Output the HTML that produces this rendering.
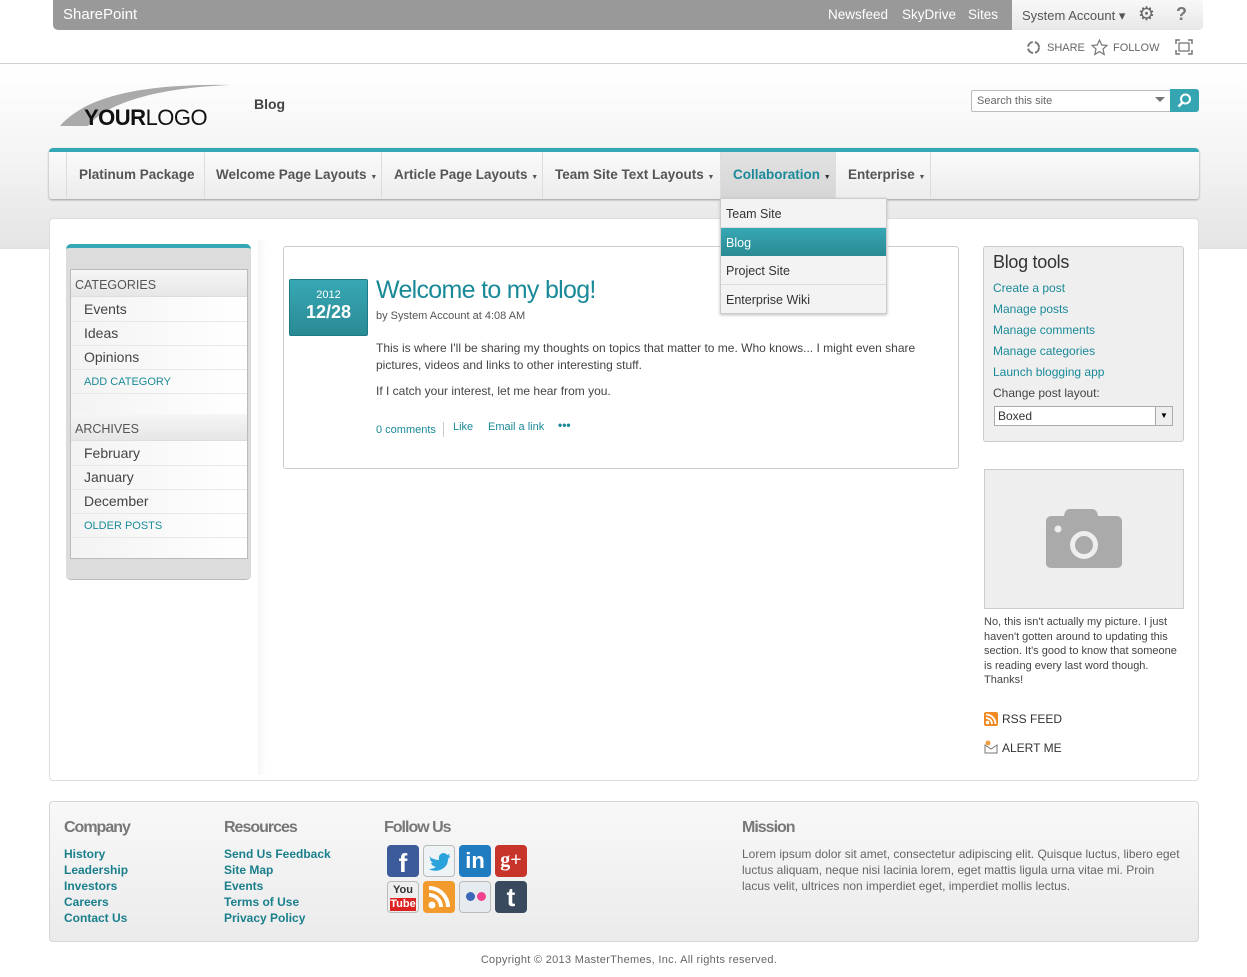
<!DOCTYPE html>
<html><head><meta charset="utf-8"><style>
*{margin:0;padding:0;box-sizing:border-box}
body{width:1247px;height:977px;position:relative;overflow:hidden;font-family:"Liberation Sans",Arial,sans-serif;background:#fff;color:#444}
.a{position:absolute}
a{text-decoration:none}
.nv{top:167px;font-size:13.5px;font-weight:bold;color:#555;position:absolute}
</style></head><body>
<div class="a" style="left:0;top:63px;width:1247px;height:186px;border-top:1px solid #d0d0d0;background:linear-gradient(#fff 0%,#f4f4f4 50%,#e4e4e4 100%)"></div>
<div class="a" style="left:0;top:248px;width:1247px;height:1px;background:#e2e2e2"></div>
<div class="a" style="left:53px;top:0;width:1150px;height:30px;background:#999;border-radius:0 0 5px 5px"></div>
<div class="a" style="left:1012px;top:0;width:191px;height:30px;background:linear-gradient(#f8f8f8,#e8e8e8);border-radius:0 0 5px 0"></div>
<div class="a" style="left:63px;top:6px;font-size:15px;color:#fff">SharePoint</div>
<div class="a" style="left:828px;top:7px;font-size:13.5px;color:#fff">Newsfeed</div>
<div class="a" style="left:902px;top:7px;font-size:13.5px;color:#fff">SkyDrive</div>
<div class="a" style="left:968px;top:7px;font-size:13.5px;color:#fff">Sites</div>
<div class="a" style="left:1022px;top:8px;font-size:13px;color:#555">System Account ▾</div>
<div class="a" style="left:1138px;top:3px;font-size:19px;color:#666">⚙</div>
<div class="a" style="left:1176px;top:4px;font-size:18px;font-weight:bold;color:#777">?</div>
<svg class="a" style="left:1026px;top:40px" width="15" height="15"><circle cx="7.5" cy="7.5" r="5.5" stroke="#777" stroke-width="2" fill="none" stroke-dasharray="7 2"/></svg>
<div class="a" style="left:1047px;top:42px;font-size:11px;color:#666">SHARE</div>
<svg class="a" style="left:1091px;top:39px" width="17" height="17"><path d="M8.5 1 L10.7 6 L16 6.4 L12 10 L13.2 15.5 L8.5 12.6 L3.8 15.5 L5 10 L1 6.4 L6.3 6 Z" fill="none" stroke="#777" stroke-width="1.2"/></svg>
<div class="a" style="left:1113px;top:42px;font-size:11px;color:#666">FOLLOW</div>
<svg class="a" style="left:1175px;top:39px" width="18" height="16"><path d="M1 5V1H5M13 1H17V5M17 11V15H13M5 15H1V11" stroke="#777" stroke-width="1.5" fill="none"/><rect x="4" y="4" width="10" height="8" fill="none" stroke="#777" stroke-width="1.3"/></svg>
<svg class="a" style="left:58px;top:82px" width="175" height="48"><path d="M2 44 C30 12 90 2 172 3 C100 6 50 20 30 44 Z" fill="#aaa"/></svg>
<div class="a" style="left:84px;top:105px;font-size:22px;color:#111;letter-spacing:-0.5px"><b>YOUR</b>LOGO</div>
<div class="a" style="left:254px;top:96px;font-size:14px;font-weight:bold;color:#444">Blog</div>
<div class="a" style="left:971px;top:90px;width:200px;height:22px;border:1px solid #bbb;background:#fff;border-radius:2px 0 0 2px;font-size:11px;color:#666;padding:4px 5px">Search this site</div>
<div class="a" style="left:1155px;top:97px;border:5px solid transparent;border-top:5px solid #777"></div>
<div class="a" style="left:1170px;top:89px;width:29px;height:23px;background:#35a5b2;border-radius:0 3px 3px 0"></div>
<svg class="a" style="left:1176px;top:92px" width="17" height="17"><circle cx="9.5" cy="7" r="4.5" stroke="#fff" stroke-width="2" fill="none"/><path d="M6.5 10.5 L2.5 14.5" stroke="#fff" stroke-width="2.5"/></svg>
<div class="a" style="left:49px;top:148px;width:1150px;height:51px;border-top:4px solid #35a8b5;border-radius:4px 4px 3px 3px;background:linear-gradient(#fafafa,#ececec);box-shadow:0 1px 2px #999"></div>
<div class="a" style="left:720px;top:152px;width:115px;height:46px;background:linear-gradient(#e2e2e2,#d6d6d6)"></div>
<div class="a" style="left:66px;top:152px;width:1px;height:46px;background:#ddd"></div>
<div class="a" style="left:204px;top:152px;width:1px;height:46px;background:#ddd"></div>
<div class="a" style="left:381px;top:152px;width:1px;height:46px;background:#ddd"></div>
<div class="a" style="left:542px;top:152px;width:1px;height:46px;background:#ddd"></div>
<div class="a" style="left:720px;top:152px;width:1px;height:46px;background:#ddd"></div>
<div class="a" style="left:835px;top:152px;width:1px;height:46px;background:#ddd"></div>
<div class="a" style="left:930px;top:152px;width:1px;height:46px;background:#ddd"></div>
<div class="nv" style="left:79px">Platinum Package</div>
<div class="nv" style="left:216px">Welcome Page Layouts <span style="font-size:7px">▼</span></div>
<div class="nv" style="left:394px">Article Page Layouts <span style="font-size:7px">▼</span></div>
<div class="nv" style="left:555px">Team Site Text Layouts <span style="font-size:7px">▼</span></div>
<div class="nv" style="left:733px;color:#1a8a99">Collaboration <span style="font-size:7px;color:#333">▼</span></div>
<div class="nv" style="left:848px">Enterprise <span style="font-size:7px">▼</span></div>
<div class="a" style="left:49px;top:218px;width:1150px;height:563px;border:1px solid #ddd;border-radius:4px;background:#fff"></div>
<div class="a" style="left:258px;top:240px;width:8px;height:535px;background:linear-gradient(90deg,#f6f6f6,#fff)"></div>
<div class="a" style="left:66px;top:244px;width:185px;height:336px;background:#dcdcdc;border-top:4px solid #35a8b5;border-radius:5px;border-bottom:1px solid #bbb"></div>
<div class="a" style="left:70px;top:269px;width:178px;height:290px;background:linear-gradient(90deg,#f3f3f3,#fff);border:1px solid #bbb"></div>
<div class="a" style="left:71px;top:270px;width:176px;height:27px;background:linear-gradient(#f6f6f6,#e6e6e6);border-bottom:1px solid #ddd"></div>
<div class="a" style="left:75px;top:278px;font-size:12.5px;color:#555">CATEGORIES</div>
<div style="position:absolute;left:71px;top:298px;width:176px;font-size:14px;color:#444">
<div style="height:24px;border-bottom:1px solid #e8e8e8;padding:3px 0 0 13px">Events</div>
<div style="height:24px;border-bottom:1px solid #e8e8e8;padding:3px 0 0 13px">Ideas</div>
<div style="height:24px;border-bottom:1px solid #e8e8e8;padding:3px 0 0 13px">Opinions</div>
<div style="height:24px;border-bottom:1px solid #e8e8e8;padding:6px 0 0 13px;font-size:11px;color:#1a8a99">ADD CATEGORY</div>
</div>
<div class="a" style="left:71px;top:414px;width:176px;height:27px;background:linear-gradient(#f6f6f6,#e6e6e6);border-bottom:1px solid #ddd"></div>
<div class="a" style="left:75px;top:422px;font-size:12.5px;color:#555">ARCHIVES</div>
<div style="position:absolute;left:71px;top:442px;width:176px;font-size:14px;color:#444">
<div style="height:24px;border-bottom:1px solid #e8e8e8;padding:3px 0 0 13px">February</div>
<div style="height:24px;border-bottom:1px solid #e8e8e8;padding:3px 0 0 13px">January</div>
<div style="height:24px;border-bottom:1px solid #e8e8e8;padding:3px 0 0 13px">December</div>
<div style="height:24px;border-bottom:1px solid #e8e8e8;padding:6px 0 0 13px;font-size:11px;color:#1a8a99">OLDER POSTS</div>
</div>
<div class="a" style="left:283px;top:246px;width:676px;height:223px;border:1px solid #ccc;border-radius:3px"></div>
<div class="a" style="left:289px;top:279px;width:79px;height:57px;background:linear-gradient(#37a8b4,#2a8a94);border:1px solid #1e7a84;border-radius:2px;color:#fff;text-align:center">
<div style="font-size:11px;margin-top:9px">2012</div><div style="font-size:18px;font-weight:bold;margin-top:1px">12/28</div></div>
<div class="a" style="left:376px;top:276px;font-size:25px;color:#1a8a99;letter-spacing:-0.7px">Welcome to my blog!</div>
<div class="a" style="left:376px;top:310px;font-size:11px;color:#555">by System Account at 4:08 AM</div>
<div class="a" style="left:376px;top:340px;width:560px;font-size:12px;line-height:17px;color:#444">This is where I'll be sharing my thoughts on topics that matter to me. Who knows... I might even share pictures, videos and links to other interesting stuff.</div>
<div class="a" style="left:376px;top:384px;font-size:12px;color:#444">If I catch your interest, let me hear from you.</div>
<div class="a" style="left:376px;top:424px;font-size:11px;color:#1a8a99">0 comments</div>
<div class="a" style="left:443px;top:422px;width:1px;height:15px;background:#ccc"></div>
<div class="a" style="left:453px;top:421px;font-size:11px;color:#1a8a99">Like</div>
<div class="a" style="left:488px;top:421px;font-size:11px;color:#1a8a99">Email a link</div>
<div class="a" style="left:558px;top:418px;font-size:12px;font-weight:bold;color:#1a8a99">•••</div>
<div class="a" style="left:720px;top:198px;width:167px;height:116px;background:#f3f3f3;border:1px solid #ccc;box-shadow:0 1px 3px #bbb"></div>
<div class="a" style="left:721px;top:227px;width:165px;height:1px;background:#ddd"></div>
<div class="a" style="left:721px;top:228px;width:165px;height:28px;background:linear-gradient(#37a8b4,#2a8a94)"></div>
<div class="a" style="left:721px;top:284px;width:165px;height:1px;background:#ddd"></div>
<div class="a" style="left:726px;top:207px;font-size:12.5px;color:#333">Team Site</div>
<div class="a" style="left:726px;top:236px;font-size:12.5px;color:#fff">Blog</div>
<div class="a" style="left:726px;top:264px;font-size:12.5px;color:#333">Project Site</div>
<div class="a" style="left:726px;top:293px;font-size:12.5px;color:#333">Enterprise Wiki</div>
<div class="a" style="left:983px;top:246px;width:201px;height:196px;background:#efefef;border:1px solid #ccc;border-radius:3px"></div>
<div class="a" style="left:993px;top:252px;font-size:18px;color:#333;letter-spacing:-0.3px">Blog tools</div>
<div class="a" style="left:993px;top:278px;font-size:12px;line-height:21px;color:#1a8a99">Create a post<br>Manage posts<br>Manage comments<br>Manage categories<br>Launch blogging app<br><span style="color:#444">Change post layout:</span></div>
<div class="a" style="left:994px;top:406px;width:179px;height:20px;background:#fff;border:1px solid #aaa;font-size:12px;color:#333;padding:2px 3px">Boxed</div>
<div class="a" style="left:1155px;top:407px;width:17px;height:18px;background:#eee;border-left:1px solid #aaa;font-size:8px;text-align:center;line-height:18px;color:#000">▼</div>
<div class="a" style="left:984px;top:469px;width:200px;height:140px;background:#eee;border:1px solid #ccc"></div>
<svg class="a" style="left:1046px;top:509px" width="77" height="60"><path d="M24 0 H46 Q51 0 52 7 H70 Q76 7 76 13 V54 Q76 59 70 59 H6 Q0 59 0 54 V13 Q0 7 6 7 H18 Q19 0 24 0Z" fill="#aaa"/><circle cx="38" cy="36" r="14" fill="#eee"/><circle cx="38" cy="36" r="9" fill="#aaa"/><circle cx="12" cy="20" r="3.5" fill="#eee"/></svg>
<div class="a" style="left:984px;top:615px;width:200px;font-size:11px;line-height:14.5px;color:#444">No, this isn't actually my picture. I just haven't gotten around to updating this section. It's good to know that someone is reading every last word though. Thanks!</div>
<div class="a" style="left:984px;top:712px;width:14px;height:14px;background:#f08a24;border-radius:2px"></div>
<svg class="a" style="left:984px;top:712px" width="14" height="14"><circle cx="3.5" cy="10.5" r="1.7" fill="#fff"/><path d="M2 6 A6 6 0 0 1 8 12 M2 2.5 A9.5 9.5 0 0 1 11.5 12" stroke="#fff" stroke-width="1.8" fill="none"/></svg>
<div class="a" style="left:1002px;top:712px;font-size:12px;color:#333">RSS FEED</div>
<svg class="a" style="left:984px;top:740px" width="15" height="14"><path d="M1 5 L7 9 L13 5 V13 H1 Z" fill="#fff" stroke="#777"/><circle cx="4" cy="3" r="2.5" fill="#f0a040"/></svg>
<div class="a" style="left:1002px;top:741px;font-size:12px;color:#333">ALERT ME</div>
<div class="a" style="left:49px;top:801px;width:1150px;height:141px;background:linear-gradient(#f8f8f8,#ebebeb);border:1px solid #d6d6d6;border-radius:4px"></div>
<div class="a" style="left:64px;top:819px;font-size:16px;font-weight:bold;color:#777;letter-spacing:-1px">Company</div>
<div class="a" style="left:224px;top:819px;font-size:16px;font-weight:bold;color:#777;letter-spacing:-1px">Resources</div>
<div class="a" style="left:384px;top:819px;font-size:16px;font-weight:bold;color:#777;letter-spacing:-1px">Follow Us</div>
<div class="a" style="left:742px;top:819px;font-size:16px;font-weight:bold;color:#777;letter-spacing:-1px">Mission</div>
<div class="a" style="left:64px;top:846px;font-size:12px;line-height:16px;font-weight:bold;color:#1a7f8c">History<br>Leadership<br>Investors<br>Careers<br>Contact Us</div>
<div class="a" style="left:224px;top:846px;font-size:12px;line-height:16px;font-weight:bold;color:#1a7f8c">Send Us Feedback<br>Site Map<br>Events<br>Terms of Use<br>Privacy Policy</div>
<div class="a" style="left:742px;top:846px;width:442px;font-size:12px;line-height:16px;color:#666">Lorem ipsum dolor sit amet, consectetur adipiscing elit. Quisque luctus, libero eget luctus aliquam, neque nisi lacinia lorem, eget mattis ligula urna vitae mi. Proin<br>lacus velit, ultrices non imperdiet eget, imperdiet mollis lectus.</div>
<div class="a" style="left:387px;top:845px;width:32px;height:32px;background:#3b5b9a;border-radius:4px;color:#fff;font:bold 26px 'Liberation Sans';text-align:center;line-height:36px">f</div>
<div class="a" style="left:423px;top:845px;width:32px;height:32px;background:#eef3f6;border:1px solid #bbb;border-radius:4px"></div>
<svg class="a" style="left:423px;top:845px" width="32" height="32"><path d="M6 11 Q10 15 16 15 Q15 9 20 8 Q23 8 24 10 L27 9 L25.5 11.5 L27.5 11 Q26 13 25 14 Q25 22 17 25 Q11 27 6 24 Q10 24 13 22 Q9 21 8 18 L10 18 Q7 16 7 13 L9 14 Q6 12 6 11Z" fill="#2aa3dd"/></svg>
<div class="a" style="left:459px;top:845px;width:32px;height:32px;background:#1f7cc0;border-radius:4px;color:#fff;font:bold 22px 'Liberation Sans';text-align:center;line-height:32px">in</div>
<div class="a" style="left:495px;top:845px;width:32px;height:32px;background:#c7352a;border-radius:4px;color:#fff;font:bold 20px 'Liberation Serif';text-align:center;line-height:30px">g+</div>
<div class="a" style="left:387px;top:881px;width:32px;height:32px;background:#eee;border:1px solid #bbb;border-radius:4px;text-align:center;font:bold 11px 'Liberation Sans';color:#333;line-height:13px;padding-top:2px">You<div style="background:#d22;color:#fff;margin:1px 2px 0">Tube</div></div>
<div class="a" style="left:423px;top:881px;width:32px;height:32px;background:#f39a2c;border-radius:4px"></div>
<svg class="a" style="left:423px;top:881px" width="32" height="32"><circle cx="9" cy="24" r="3.5" fill="#fff"/><path d="M6 14 A12 12 0 0 1 18 26 M6 7 A19 19 0 0 1 25 26" stroke="#fff" stroke-width="4" fill="none"/></svg>
<div class="a" style="left:459px;top:881px;width:32px;height:32px;background:#e6ebef;border:1px solid #bbb;border-radius:4px"></div>
<div class="a" style="left:466px;top:892px;width:9px;height:9px;border-radius:50%;background:#3b67b8"></div>
<div class="a" style="left:477px;top:892px;width:9px;height:9px;border-radius:50%;background:#f0428f"></div>
<div class="a" style="left:495px;top:881px;width:32px;height:32px;background:#3a4a5e;border-radius:4px;color:#fff;font:bold 26px 'Liberation Sans';text-align:center;line-height:32px">t</div>
<div class="a" style="left:0;top:954px;width:1258px;text-align:center;font-size:11px;color:#666;letter-spacing:0.3px">Copyright © 2013 MasterThemes, Inc. All rights reserved.</div>
</body></html>
